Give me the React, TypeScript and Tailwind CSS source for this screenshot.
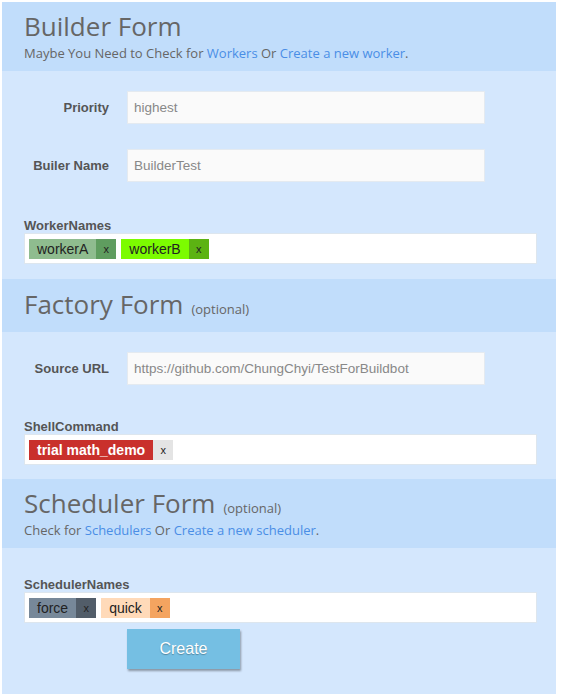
import React from "react";

type Tag = { text: string; bg: string; xBg: string; textCls?: string };

const head = "font-['Open_Sans',sans-serif] text-[#666]";
const arial = "font-['Liberation_Sans',Arial,sans-serif]";

const Header = ({ title, optional, children }: { title: string; optional?: boolean; children?: React.ReactNode }) => (
  <div className={`bg-[#c1ddfb] px-[22px] ${children ? "pt-[6px] pb-[9px]" : "pt-[7px] pb-[10px]"}`}>
    <div className="flex items-baseline gap-[8px]">
      <h2 className={`${head} text-[26px] leading-[36px]`}>{title}</h2>
      {optional && <span className={`${head} text-[13px]`}>(optional)</span>}
    </div>
    {children && <p className={`${head} text-[13px] leading-[18px]`}>{children}</p>}
  </div>
);

const A = ({ children }: { children: React.ReactNode }) => (
  <a href="#" className="text-[#4a8ee6]">
    {children}
  </a>
);

const Field = ({ label, value }: { label: string; value: string }) => (
  <div className="flex items-center gap-[18px] pl-[20px]">
    <label className={`${arial} w-[87px] text-right text-[13px] font-bold text-[#555]`}>{label}</label>
    <input
      readOnly
      value={value}
      className={`${arial} h-[33px] w-[358px] border border-[#e4eaf0] bg-[#fafafa] px-[6px] text-[13.5px] text-[#888] outline-none`}
    />
  </div>
);

const TagBox = ({ label, tags }: { label: string; tags: Tag[] }) => (
  <div className="pl-[22px] pr-[19px]">
    <div className={`${arial} text-[13px] font-bold leading-[14px] text-[#555]`}>{label}</div>
    <div className="flex h-[31px] items-center gap-[5px] border border-[#dde6ee] bg-white px-[4px]">
      {tags.map((t) => (
        <span key={t.text} className={`${arial} flex h-[20px] text-[14px] leading-[20px]`}>
          <span className={`px-[8px] ${t.bg} ${t.textCls ?? "text-[#222]"}`}>{t.text}</span>
          <span className={`w-[20px] text-center text-[11px] text-[#222] ${t.xBg}`}>x</span>
        </span>
      ))}
    </div>
  </div>
);

export default function App() {
  return (
    <div className="min-h-[698px] bg-white p-[2px]">
      <div className="w-[554px] bg-[#d4e7fd]">
        <Header title="Builder Form">
          Maybe You Need to Check for <A>Workers</A> Or <A>Create a new worker</A>.
        </Header>
        <div className="flex flex-col pt-[20px] pb-[15px]">
          <div className="flex flex-col gap-[25px]">
            <Field label="Priority" value="highest" />
            <Field label="Builer Name" value="BuilderTest" />
          </div>
          <div className="mt-[37px]">
            <TagBox
              label="WorkerNames"
              tags={[
                { text: "workerA", bg: "bg-[#8fbc8f]", xBg: "bg-[#5f9d5f]" },
                { text: "workerB", bg: "bg-[#7cfc00]", xBg: "bg-[#5cb312]" },
              ]}
            />
          </div>
        </div>

        <Header title="Factory Form" optional />
        <div className="flex flex-col pt-[20px] pb-[14px]">
          <Field label="Source URL" value="https://github.com/ChungChyi/TestForBuildbot" />
          <div className="mt-[35px]">
            <TagBox
              label="ShellCommand"
              tags={[
                {
                  text: "trial math_demo",
                  bg: "bg-[#c9302c] font-bold",
                  xBg: "bg-[#e4e4e4]",
                  textCls: "text-white",
                },
              ]}
            />
          </div>
        </div>

        <Header title="Scheduler Form" optional>
          Check for <A>Schedulers</A> Or <A>Create a new scheduler</A>.
        </Header>
        <div className="flex flex-col pt-[30px] pb-[25px]">
          <TagBox
            label="SchedulerNames"
            tags={[
              { text: "force", bg: "bg-[#778899]", xBg: "bg-[#525d69]" },
              { text: "quick", bg: "bg-[#ffdab9]", xBg: "bg-[#f4a460]" },
            ]}
          />
          <div className="mt-[6px] pl-[125px]">
            <button
              className={`${arial} h-[40px] w-[113px] bg-[#75bfe3] text-[16px] text-white shadow-[1px_2px_2px_rgba(0,0,0,0.35)] [text-shadow:0_1px_1px_rgba(0,0,0,0.3)]`}
            >
              Create
            </button>
          </div>
        </div>
      </div>
    </div>
  );
}
